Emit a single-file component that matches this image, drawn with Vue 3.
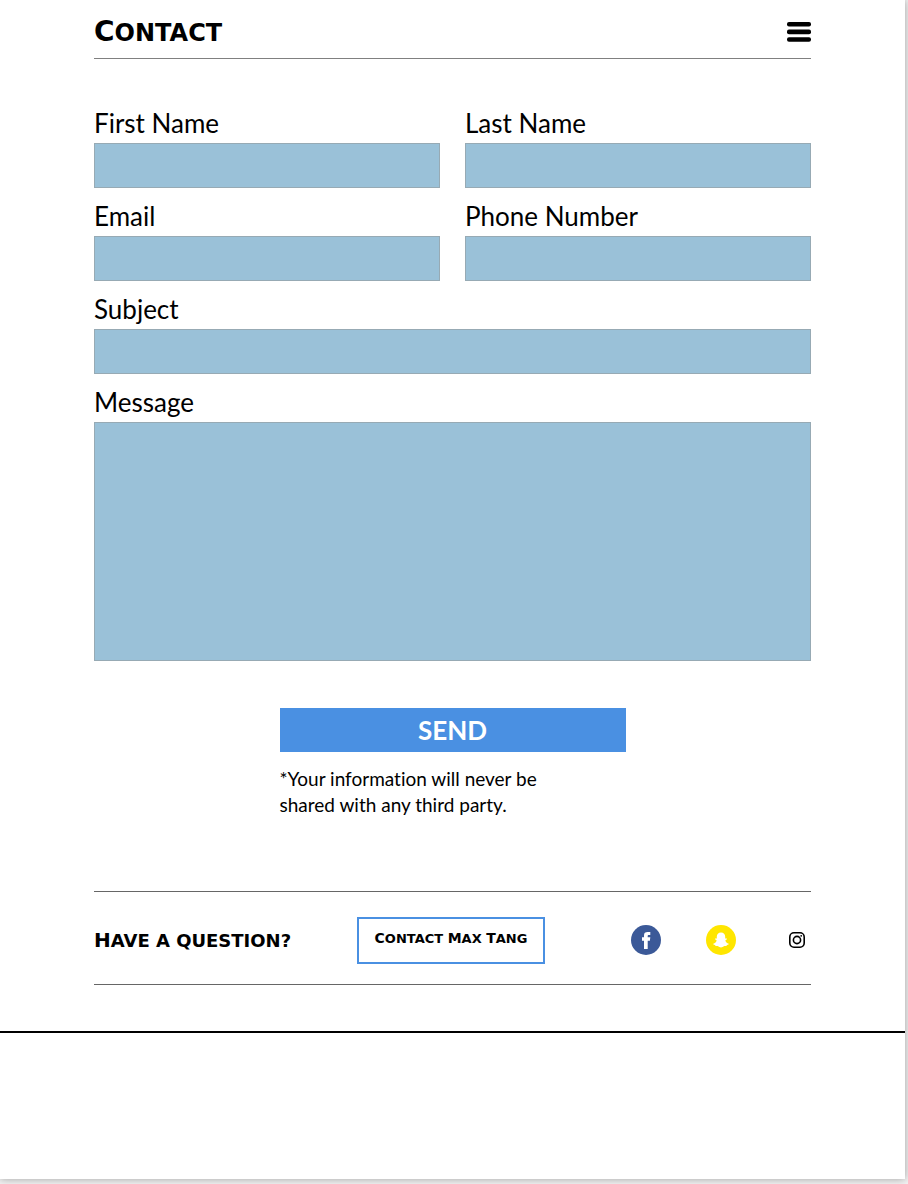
<script setup>
import { reactive } from 'vue'

const form = reactive({
  first: '',
  last: '',
  email: '',
  phone: '',
  subject: '',
  message: '',
})

const fields = [
  { key: 'first', label: 'First Name', type: 'text' },
  { key: 'last', label: 'Last Name', type: 'text' },
  { key: 'email', label: 'Email', type: 'email' },
  { key: 'phone', label: 'Phone Number', type: 'tel' },
  { key: 'subject', label: 'Subject', type: 'text', wide: true },
]

const contactWords = ['Contact', 'Max', 'Tang']
</script>

<template>
  <div class="page">
    <div class="upper">
      <header class="header">
        <h1 class="title engraved"><span class="word">Contact</span></h1>
        <button class="menu" type="button" aria-label="Menu">
          <svg width="24" height="20" viewBox="0 0 24 20" aria-hidden="true">
            <rect width="24" height="4.6" rx="2" />
            <rect y="7.6" width="24" height="4.6" rx="2" />
            <rect y="15.2" width="24" height="4.6" rx="2" />
          </svg>
        </button>
      </header>

      <form class="form" @submit.prevent>
        <div v-for="f in fields" :key="f.key" class="field" :class="{ wide: f.wide }">
          <label class="label" :for="f.key">{{ f.label }}</label>
          <input :id="f.key" v-model="form[f.key]" class="box" :type="f.type" />
        </div>
        <div class="field wide">
          <label class="label" for="message">Message</label>
          <textarea id="message" v-model="form.message" class="box area"></textarea>
        </div>
        <div class="submit wide">
          <button class="send" type="submit">SEND</button>
          <p class="note">*Your information will never be<br />shared with any third party.</p>
        </div>
      </form>

      <footer class="footer">
        <p class="question engraved"><span class="word">Have</span> a question?</p>
        <button class="contact engraved" type="button">
          <template v-for="(w, i) in contactWords" :key="w"><template v-if="i">&nbsp;</template><span class="word">{{ w }}</span></template>
        </button>
        <nav class="social" aria-label="Social media">
          <a href="#" aria-label="Facebook">
            <svg width="30" height="30" viewBox="0 0 30 30">
              <circle cx="15" cy="15" r="15" fill="#3b5998" />
              <path
                fill="#fff"
                d="M13 24V15.7H11V12.3H13V10.4C13 7.8 14.2 6.9 16.7 6.9H19.3V10.1H17.8C16.9 10.1 16.7 10.5 16.7 11.2V12.3H19.3L18.9 15.7H16.7V24Z"
              />
            </svg>
          </a>
          <a href="#" aria-label="Snapchat">
            <svg width="30" height="30" viewBox="0 0 30 30">
              <circle cx="15" cy="15" r="15" fill="#ffe600" />
              <path
                fill="#fff"
                d="M15 7.6C17.6 7.6 19.2 9.4 19.2 11.8V13.4C19.8 13.7 20.7 13.1 21 13.7C21.3 14.5 19.5 14.7 19.4 15.5C19.5 17 21 18.4 22.7 18.8C23.3 19.2 22 20 21 20.1C20.6 20.4 20.9 21 20.3 21.1C19.5 21.1 18.7 20.8 17.8 21.3C16.9 21.9 16.2 22.5 15 22.5S13.1 21.9 12.2 21.3C11.3 20.8 10.5 21.1 9.7 21.1C9.1 21 9.4 20.4 9 20.1C8 20 6.7 19.2 7.3 18.8C9 18.4 10.5 17 10.6 15.5C10.5 14.7 8.7 14.5 9 13.7C9.3 13.1 10.2 13.7 10.8 13.4V11.8C10.8 9.4 12.4 7.6 15 7.6Z"
              />
            </svg>
          </a>
          <a href="#" aria-label="Instagram">
            <svg width="30" height="30" viewBox="0 0 30 30" fill="none" stroke="#000" stroke-width="1.6">
              <rect x="8.8" y="7.8" width="14.4" height="14.4" rx="4.2" />
              <circle cx="16" cy="15" r="3.6" />
              <circle cx="20.2" cy="10.8" r="0.9" fill="#000" stroke="none" />
            </svg>
          </a>
        </nav>
      </footer>
    </div>
  </div>
</template>

<style>
body {
  background: #f2f2f2;
}
</style>

<style scoped>
.page {
  box-sizing: border-box;
  min-height: calc(100vh - 5px);
  margin: 0 3px 5px 0;
  background: #fff;
  box-shadow: 0 0 8px rgba(0, 0, 0, 0.35);
  color: #000;
  font-family: Lato, "Open Sans", sans-serif;
  font-variant-ligatures: none;
}

.upper {
  padding: 0 94px 46px;
  border-bottom: 2px solid #000;
}

.engraved {
  margin: 0;
  font-family: "DejaVu Sans", sans-serif;
  font-weight: 700;
  text-transform: uppercase;
  white-space: nowrap;
}

.word {
  display: inline-block;
}

.header {
  display: flex;
  align-items: center;
  justify-content: space-between;
  box-sizing: border-box;
  height: 59px;
  padding-top: 6px;
  border-bottom: 1px solid #808080;
}

.title {
  font-size: 24px;
  line-height: 32px;
}

.title .word::first-letter {
  font-size: 28px;
}

.menu {
  display: flex;
  padding: 0;
  border: 0;
  background: none;
}

.form {
  display: grid;
  grid-template-columns: 1fr 1fr;
  column-gap: 25px;
  padding-top: 36px;
}

.wide {
  grid-column: 1 / -1;
}

.field {
  display: flex;
  flex-direction: column;
}

.label {
  padding-top: 8px;
  font-size: 26px;
  line-height: 40px;
}

.box {
  box-sizing: border-box;
  width: 100%;
  height: 45px;
  padding: 8px;
  border: 1px solid #97aab4;
  border-radius: 0;
  background: #9ac1d8;
  font: inherit;
  font-size: 20px;
}

.area {
  display: block;
  height: 239px;
  resize: none;
}

.submit {
  width: 346px;
  max-width: 100%;
  margin: 47px auto 0;
}

.send {
  display: block;
  width: 100%;
  height: 44px;
  padding: 0;
  border: 0;
  background: #4a90e2;
  color: #fff;
  font-family: inherit;
  font-size: 26px;
  font-weight: 700;
}

.note {
  margin: 14px 0 0;
  font-size: 19px;
  line-height: 26px;
}

.footer {
  display: grid;
  grid-template-columns: 263px 188px 1fr;
  align-items: center;
  box-sizing: border-box;
  height: 94px;
  margin-top: 73px;
  padding-top: 4px;
  border-top: 1px solid #666;
  border-bottom: 1px solid #666;
}

.question {
  font-size: 18px;
  line-height: 24px;
}

.question .word::first-letter {
  font-size: 20px;
}

.contact {
  height: 47px;
  padding: 0 0 4px;
  border: 2px solid #4a90e2;
  background: #fff;
  color: #000;
  font-size: 13px;
}

.contact .word::first-letter {
  font-size: 14px;
}

.social {
  display: flex;
  justify-content: flex-end;
  gap: 45px;
}

.social a,
.social svg {
  display: block;
}
</style>
